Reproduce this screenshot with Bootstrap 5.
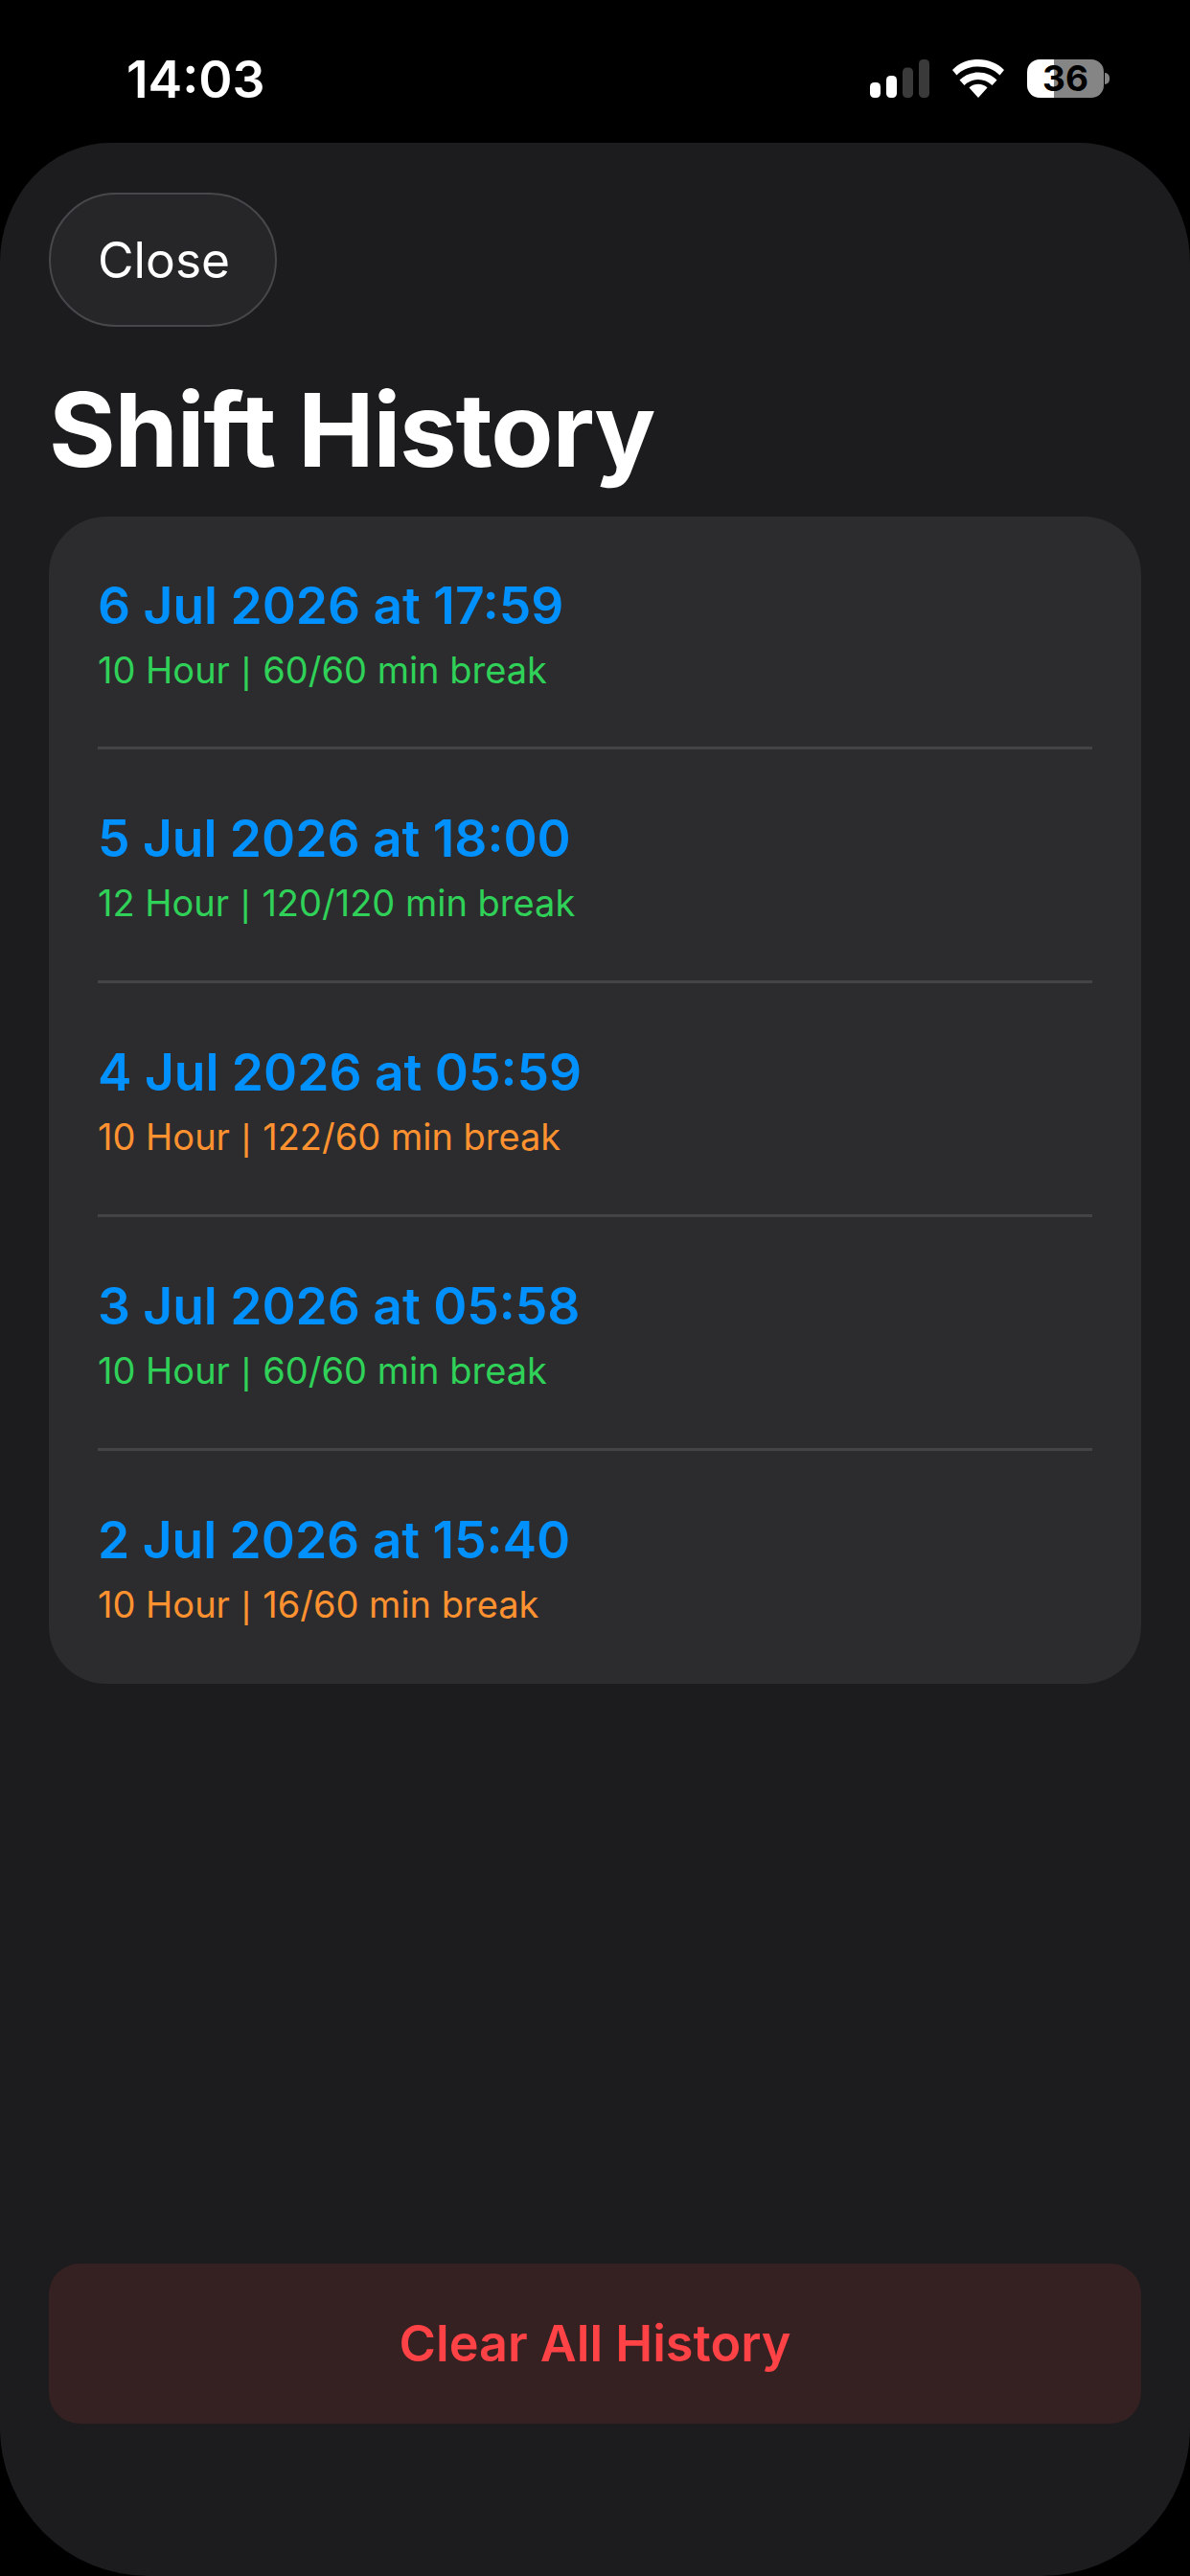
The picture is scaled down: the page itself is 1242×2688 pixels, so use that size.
<!DOCTYPE html>
<html lang="en">
<head>
<meta charset="utf-8">
<title>Shift History</title>
<link rel="stylesheet" href="https://cdn.jsdelivr.net/npm/bootstrap@5.3.0/dist/css/bootstrap.min.css">
<style>
html,body{width:1242px;height:2688px;margin:0;background:#000;font-family:Inter,"Noto Sans",sans-serif;overflow:hidden}
.phone-frame{height:2688px}
.status-row{height:149px;padding:61px 84px 0 132px;color:#fff}
.clock-text{font-size:53.5px;font-weight:600;line-height:44px}
.status-icons{gap:24px;height:42px}
.batt-wrap{gap:1px}
.batt-body{width:80px;height:40px;border-radius:13px;background:linear-gradient(90deg,#fff 35%,#858585 35%);color:#000;font-size:37px;font-weight:700;line-height:40px;text-align:center}
.batt-nub{width:5px;height:12px;border-radius:0 6px 6px 0;background:#858585}
.sheet-panel{background:#1c1c1e;border-radius:115px 115px 155px 155px / 125px 125px 155px 155px;padding:52px 51px 159px}
.close-pill{width:238px;height:140px;border-radius:70px;background:#262628;border:2px solid #48484c;color:#fff;font-size:51.5px;line-height:1;padding:2px 0 0 2px}
.close-pill:hover{background:#262628;color:#fff;border-color:#48484c}
.sheet-title{font-size:106.5px;font-weight:700;color:#fff;line-height:128px;margin:44px 0 0;letter-spacing:-1.2px}
.history-card{background:#2c2c2e;border-radius:60px;padding:0 51px;margin-top:26px;border:0}
.history-row{height:244px;padding-top:62px;border-bottom:3px solid #444447;background:transparent}
.history-row:first-child{height:243px}
.history-row:last-child{border-bottom:0;height:243px}
.row-when{font-size:53.3px;font-weight:600;line-height:62px;color:#0091ff;margin:0}
.row-meta{font-size:38px;line-height:46px;margin:13px 0 0;font-weight:400}
.pipe-glyph{font-family:"Liberation Sans",sans-serif;margin:0 1.500px}
.tone-ok{color:#30d158}
.tone-warn{color:#ff9230}
.clear-action{height:167px;border-radius:32px;background:#352022;border:0;color:#ff4245;font-size:52.2px;font-weight:600;line-height:1}
.clear-action:hover{background:#352022;color:#ff4245}
</style>
</head>
<body>
<div class="phone-frame d-flex flex-column">
  <div class="status-row d-flex justify-content-between align-items-start">
    <span class="clock-text">14:03</span>
    <div class="status-icons d-flex align-items-center">
      <svg width="62" height="40" viewBox="0 0 62 40" fill="#fff" aria-hidden="true">
        <rect x="0" y="24" width="11" height="16" rx="4.500"/>
        <rect x="17" y="17" width="11" height="23" rx="4.500"/>
        <rect x="34" y="8.500" width="11" height="31.500" rx="4.500" fill="#3a3a3a"/>
        <rect x="51" y="0" width="11" height="40" rx="4.500" fill="#3a3a3a"/>
      </svg>
      <svg width="54" height="40" viewBox="0 0 54 40" fill="#fff" aria-hidden="true">
        <path d="M27 40 L17.500 29.500 C22.500 24.500 31.500 24.500 36.500 29.500 Z"/>
        <path d="M27 13.500 C35 13.500 41.500 16.500 46.500 21.500 L41.500 27 C37.500 23 32.500 21 27 21 C21.500 21 16.500 23 12.500 27 L7.500 21.500 C12.500 16.500 19 13.500 27 13.500 Z"/>
        <path d="M27 0 C38 0 47 4 54 11 L49.500 16.500 C43.500 10.500 36 7.500 27 7.500 C18 7.500 10.500 10.500 4.500 16.500 L0 11 C7 4 16 0 27 0 Z"/>
      </svg>
      <div class="batt-wrap d-flex align-items-center">
        <div class="batt-body">36</div>
        <div class="batt-nub"></div>
      </div>
    </div>
  </div>
  <div class="sheet-panel d-flex flex-column flex-grow-1">
    <div><button type="button" class="btn close-pill">Close</button></div>
    <h1 class="sheet-title">Shift History</h1>
    <div class="list-group history-card">
      <div class="history-row">
        <p class="row-when">6 Jul 2026 at 17:59</p>
        <p class="row-meta tone-ok">10 Hour <span class="pipe-glyph">|</span> 60/60 min break</p>
      </div>
      <div class="history-row">
        <p class="row-when">5 Jul 2026 at 18:00</p>
        <p class="row-meta tone-ok">12 Hour <span class="pipe-glyph">|</span> 120/120 min break</p>
      </div>
      <div class="history-row">
        <p class="row-when">4 Jul 2026 at 05:59</p>
        <p class="row-meta tone-warn">10 Hour <span class="pipe-glyph">|</span> 122/60 min break</p>
      </div>
      <div class="history-row">
        <p class="row-when">3 Jul 2026 at 05:58</p>
        <p class="row-meta tone-ok">10 Hour <span class="pipe-glyph">|</span> 60/60 min break</p>
      </div>
      <div class="history-row">
        <p class="row-when">2 Jul 2026 at 15:40</p>
        <p class="row-meta tone-warn">10 Hour <span class="pipe-glyph">|</span> 16/60 min break</p>
      </div>
    </div>
    <button type="button" class="btn clear-action w-100 mt-auto">Clear All History</button>
  </div>
</div>
<script src="https://cdn.jsdelivr.net/npm/bootstrap@5.3.0/dist/js/bootstrap.bundle.min.js"></script>
</body>
</html>
